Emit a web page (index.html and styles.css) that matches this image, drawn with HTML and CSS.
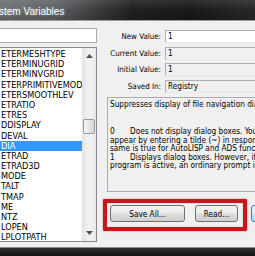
FILE: index.html
```html
<!DOCTYPE html>
<html>
<head>
<meta charset="utf-8">
<link rel="stylesheet" href="styles.css">
</head>
<body>
<div class="window">
  <div class="titlebar"><span class="title">stem Variables</span></div>
  <div class="client">
    <div class="left">
      <div class="search"></div>
      <div class="listbox">
        <ul class="items">
          <li>ETERMESHTYPE</li>
          <li>ETERMINUGRID</li>
          <li>ETERMINVGRID</li>
          <li>ETERPRIMITIVEMOD</li>
          <li>ETERSMOOTHLEV</li>
          <li>ETRATIO</li>
          <li>ETRES</li>
          <li>DDISPLAY</li>
          <li>DEVAL</li>
          <li class="sel">DIA</li>
          <li>ETRAD</li>
          <li>ETRAD3D</li>
          <li>MODE</li>
          <li>TALT</li>
          <li>TMAP</li>
          <li>ME</li>
          <li>NTZ</li>
          <li>LOPEN</li>
          <li>LPLOTPATH</li>
        </ul>
        <div class="vscroll">
          <div class="sb-btn"><svg width="7" height="4" viewBox="0 0 7 4"><polygon points="0,4 3.5,0 7,4" fill="#505050"/></svg></div>
          <div class="sb-track"><div class="sb-thumb"></div></div>
          <div class="sb-btn"><svg width="7" height="4" viewBox="0 0 7 4"><polygon points="0,0 7,0 3.5,4" fill="#505050"/></svg></div>
        </div>
      </div>
    </div>
    <div class="right">
      <div class="form">
        <span class="lbl">New Value:</span><div class="field edit">1</div>
        <span class="lbl">Current Value:</span><div class="field">1</div>
        <span class="lbl">Initial Value:</span><div class="field">1</div>
        <span class="lbl">Saved In:</span><div class="field">Registry</div>
      </div>
      <div class="desc">
        <p>Suppresses display of file navigation dialog boxes.</p>
        <p class="gap"><span class="num">0</span>Does not display dialog boxes. You can still request a<br>appear by entering a tilde (~) in response to the first<br>same is true for AutoLISP and ADS functions.<br><span class="num">1</span>Displays dialog boxes. However, if a script or<br>program is active, an ordinary prompt is displayed.</p>
      </div>
      <div class="buttons">
        <button class="btn b1">Save All...</button>
        <button class="btn b2">Read...</button>
        <button class="btn b3">Close</button>
      </div>
    </div>
  </div>
  <div class="frame-bottom"></div>
</div>
<div class="highlight"></div>
</body>
</html>
```

FILE: styles.css
```css
body {
  margin: 0;
  width: 255px;
  height: 256px;
  overflow: hidden;
  background: #f0f0f0;
  font-family: "DejaVu Sans Condensed", "DejaVu Sans", sans-serif;
  font-stretch: condensed;
  color: #000;
  position: relative;
}

.window {
  display: flex;
  flex-direction: column;
  height: 256px;
}

.titlebar {
  flex: none;
  height: 21px;
  box-sizing: border-box;
  border-bottom: 1px solid #9a9a9a;
  background:
    linear-gradient(to bottom, rgba(255,255,255,0.10), rgba(255,255,255,0) 50%, rgba(0,0,0,0.15)),
    linear-gradient(to right, #6c6f72 0%, #5e6164 22%, #3a3c3e 38%, #1f2022 52%, #18191a 75%, #26282a 100%);
  display: flex;
  align-items: center;
}

.title {
  font-family: "Liberation Sans", Arial, sans-serif;
  font-stretch: normal;
  color: #fff;
  font-size: 10px;
  margin-left: -1px;
  padding-top: 2px;
  text-shadow: 0 0 3px rgba(255,255,255,0.35);
}

.client {
  flex: 1;
  display: flex;
  min-height: 0;
}

.left {
  flex: none;
  width: 99px;
  margin-left: -2px;
  padding-top: 7px;
  display: flex;
  flex-direction: column;
}

.search {
  height: 15px;
  box-sizing: border-box;
  border: 1px solid #abadb3;
  background: #fff;
}

.listbox {
  margin-top: 4px;
  height: 195px;
  box-sizing: border-box;
  border: 1px solid #828790;
  background: #fff;
  display: flex;
}

.items {
  flex: 1;
  list-style: none;
  margin: 0;
  padding: 1px 0 0 0;
  font-size: 9.1px;
  line-height: 10.2px;
  overflow: hidden;
  white-space: nowrap;
}

.items li {
  padding-left: 2px;
  height: 10.2px;
}

.items li.sel {
  background: #3399ff;
  color: #fff;
}

.vscroll {
  flex: none;
  width: 14px;
  display: flex;
  flex-direction: column;
  background: linear-gradient(to right, #e2e2e2, #f1f1f1 40%, #f1f1f1 70%, #e6e6e6);
}

.sb-btn {
  height: 16px;
  display: flex;
  align-items: center;
  justify-content: center;
}

.sb-track {
  flex: 1;
}

.sb-thumb {
  margin: 55px 1px 0;
  height: 15px;
  box-sizing: border-box;
  border: 1px solid #999;
  border-radius: 2px;
  background: linear-gradient(to right, #f5f5f5, #e6e6e6 50%, #d4d4d4);
}

.right {
  flex: none;
  width: 200px;
}

.form {
  display: grid;
  grid-template-columns: 64px 110px;
  column-gap: 4px;
  row-gap: 3.5px;
  padding-top: 9px;
  align-items: center;
}

.lbl {
  font-size: 7.9px;
  text-align: right;
  white-space: nowrap;
}

.field {
  height: 13px;
  box-sizing: border-box;
  border: 1px solid #abadb3;
  border-right-color: #dbdfe6;
  border-bottom-color: #e3e9ef;
  background: #f0f0f0;
  font-size: 8.2px;
  line-height: 11px;
  padding-left: 2px;
}

.field.edit {
  background: #fff;
}

.desc {
  margin: 4.5px 0 0 10px;
  height: 95px;
  box-sizing: border-box;
  border: 1px solid #abadb3;
  padding: 2px;
  font-size: 8.2px;
  line-height: 8.5px;
  white-space: nowrap;
  overflow: hidden;
  background: #f0f0f0;
}

.desc p {
  margin: 0;
}

.desc .gap {
  margin-top: 18.5px;
}

.num {
  display: inline-block;
  width: 20px;
}

.buttons {
  display: flex;
  margin: 13px 0 0 13px;
}

.btn {
  flex: none;
  height: 17px;
  padding: 0;
  font-family: "DejaVu Sans Condensed", "DejaVu Sans", sans-serif;
  font-stretch: condensed;
  font-size: 8.2px;
  color: #000;
  border: 1px solid #707070;
  border-radius: 3px;
  background: linear-gradient(to bottom, #f2f2f2 0%, #ebebeb 48%, #dddddd 52%, #cfcfcf 100%);
}

.b1 { width: 75px; }
.b2 { width: 43px; margin-left: 10px; }
.b3 {
  width: 60px;
  margin-left: 13px;
  border-color: #3c7fb1;
  background: linear-gradient(to bottom, #eaf6fd 0%, #d9f0fc 48%, #bee6fd 52%, #a7d9f5 100%);
}

.frame-bottom {
  flex: none;
  height: 9px;
  box-sizing: border-box;
  border-top: 1px solid #8c8c8c;
  background: linear-gradient(to bottom, #2e2f30, #141414);
}

.highlight {
  position: absolute;
  left: 103px;
  top: 199px;
  width: 144px;
  height: 32px;
  box-sizing: border-box;
  border: 4px solid #c8161d;
  border-radius: 1px;
  box-shadow: 0 0 2px rgba(120, 0, 0, 0.5), inset 0 0 1px rgba(120, 0, 0, 0.5);
}
```
